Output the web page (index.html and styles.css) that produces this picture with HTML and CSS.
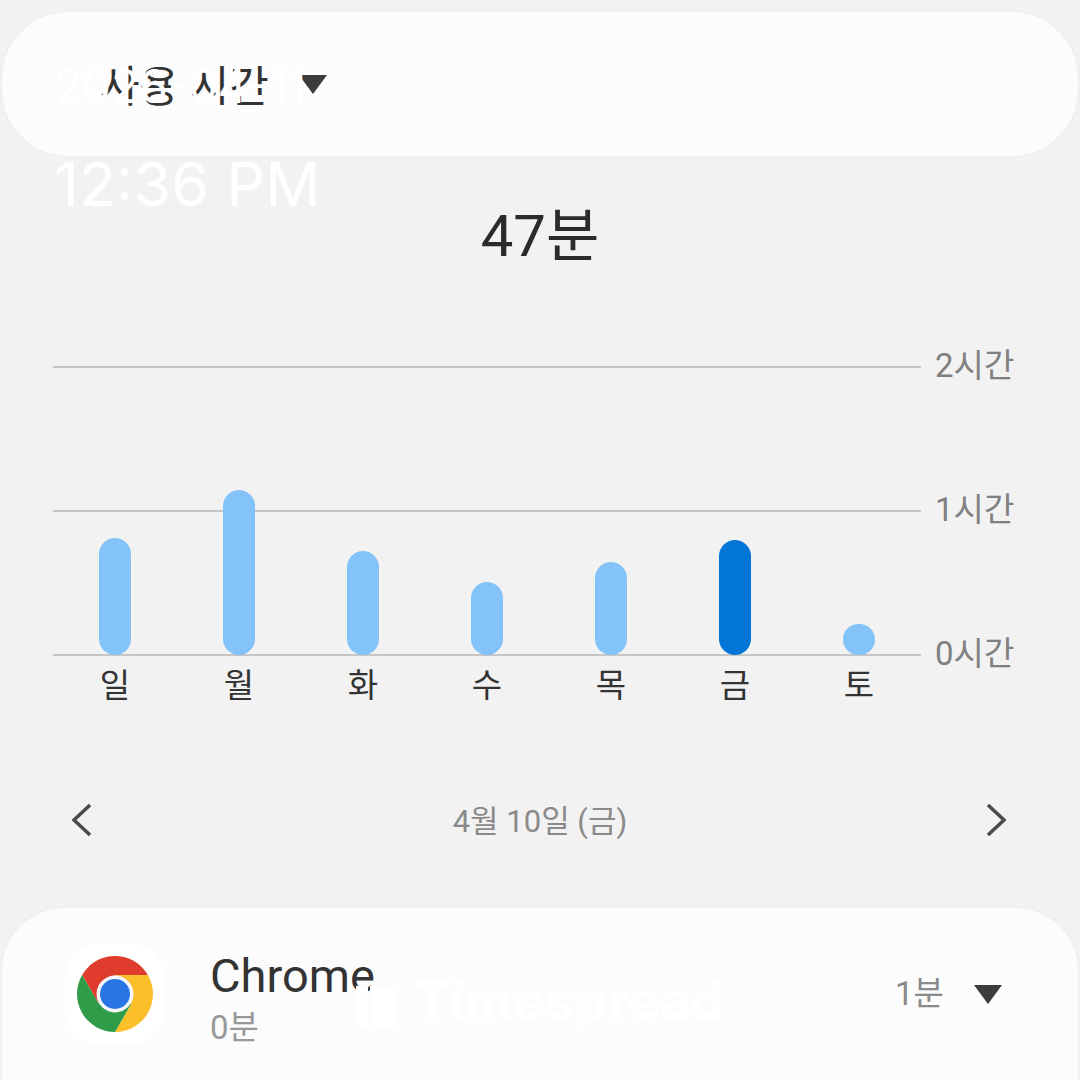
FILE: index.html
```html
<!DOCTYPE html>
<html lang="ko">
<head>
    <meta charset="UTF-8">
    <meta name="viewport" content="width=device-width, initial-scale=1.0">
    <title>사용 시간</title>
    <link rel="stylesheet" href="styles.css">
</head>
<body>
    <div class="screen">
        <div class="card top-card">
            <span class="top-title">사용 시간</span>
            <span class="arrow"></span>
        </div>

        <div class="total">47분</div>

        <div class="chart">
            <div class="grid-row"><div class="grid-line"></div><div class="grid-label">2시간</div></div>
            <div class="grid-row"><div class="grid-line"></div><div class="grid-label">1시간</div></div>
            <div class="grid-row"><div class="grid-line"></div><div class="grid-label">0시간</div></div>
            <div class="bars">
                <div class="bar-col"><div class="bar" style="height: 117px"></div></div>
                <div class="bar-col"><div class="bar" style="height: 165px"></div></div>
                <div class="bar-col"><div class="bar" style="height: 104px"></div></div>
                <div class="bar-col"><div class="bar" style="height: 73px"></div></div>
                <div class="bar-col"><div class="bar" style="height: 93px"></div></div>
                <div class="bar-col"><div class="bar bar-active" style="height: 115px"></div></div>
                <div class="bar-col"><div class="bar" style="height: 31px"></div></div>
            </div>
        </div>

        <div class="days">
            <div>일</div>
            <div>월</div>
            <div>화</div>
            <div>수</div>
            <div>목</div>
            <div>금</div>
            <div>토</div>
        </div>

        <div class="date-nav">
            <svg class="chevron" width="24" height="36" viewBox="0 0 24 36"><path d="M18 3 L2 18 L18 33" /></svg>
            <span class="date-text">4월 10일 (금)</span>
            <svg class="chevron" width="24" height="36" viewBox="0 0 24 36"><path d="M4 3 L20 18 L4 33" /></svg>
        </div>

        <div class="card app-card">
            <div class="app-icon">
                <svg width="76" height="76" viewBox="-38 -38 76 76">
                    <path fill="#e03c2d" d="M32.9 -19 H0 L-16.45 9.5 L-32.9 -19 A38 38 0 0 1 32.9 -19 Z" />
                    <path fill="#fbbf2a" d="M32.9 -19 H0 L16.45 9.5 L0 38 A38 38 0 0 0 32.9 -19 Z" />
                    <path fill="#2f9c49" d="M-32.9 -19 L-16.45 9.5 L16.45 9.5 L0 38 A38 38 0 0 1 -32.9 -19 Z" />
                    <circle r="18.5" fill="#f4f6fb" />
                    <circle r="15" fill="#2a75e6" />
                </svg>
            </div>
            <div class="app-info">
                <div class="app-name">Chrome</div>
                <div class="app-sub">0분</div>
            </div>
            <div class="app-time">1분</div>
            <span class="arrow arrow-small"></span>
        </div>
    </div>

    <!-- stamp laid over the screenshot -->
    <div class="stamp">
        <div class="stamp-date">2026-04-11</div>
        <div class="stamp-time">12:36 PM</div>
    </div>
    <div class="mark">
        <svg class="mark-icon" width="42" height="40" viewBox="0 0 42 40"><path fill="#fff" d="M0 0 H12 V11 H0 Z M0 13 H12 V40 H0 Z M14 0 H42 V40 H14 Z" /></svg>
        <span class="mark-text">Timespread</span>
    </div>
</body>
</html>
```

FILE: styles.css
```css
* {
    box-sizing: border-box;
}
body {
    margin: 0;
    background-color: #f2f2f2;
    color: #2b2b2b;
    font-family: Roboto, "Noto Sans CJK KR", sans-serif;
    position: relative;
    width: 1080px;
    height: 1080px;
    overflow: hidden;
}
.screen {
    padding-top: 12px;
}
.card {
    background-color: #fcfcfc;
    margin: 0 2px;
    box-shadow: 0 0 2px #e2e2e2;
}
.top-card {
    height: 144px;
    border-radius: 66px;
    display: flex;
    align-items: center;
    padding-left: 98px;
}
.top-title {
    font-size: 43px;
    line-height: 50px;
    color: #333;
    margin-top: 5px;
}
.arrow {
    width: 0;
    height: 0;
    margin-left: 30px;
    border-left: 14px solid transparent;
    border-right: 14px solid transparent;
    border-top: 19px solid #3c3c3c;
}
.total {
    text-align: center;
    font-size: 58px;
    line-height: 70px;
    margin-top: 45px;
}

/* chart */
.chart {
    position: relative;
    margin: 95px 0 0 53px;
    width: 970px;
    height: 290px;
    display: flex;
    flex-direction: column;
    justify-content: space-between;
}
.grid-row {
    display: flex;
    align-items: center;
    height: 2px;
}
.grid-line {
    width: 868px;
    height: 2px;
    background-color: #c6c6c6;
}
.grid-label {
    margin: 0 0 3px 14px;
    font-size: 33px;
    line-height: 40px;
    color: #808080;
}
.bars {
    position: absolute;
    left: 0;
    bottom: 1px;
    width: 868px;
    display: flex;
    align-items: flex-end;
}
.bar-col {
    flex: 1;
    display: flex;
    justify-content: center;
}
.bar {
    width: 32px;
    background-color: #84c3f9;
    border-radius: 16px;
}
.bar-active {
    background-color: #0276d6;
}
.days {
    display: flex;
    width: 868px;
    margin: 9px 0 0 53px;
    font-size: 33px;
    line-height: 42px;
    color: #333;
}
.days div {
    flex: 1;
    text-align: center;
}

/* date row */
.date-nav {
    display: flex;
    justify-content: space-between;
    align-items: center;
    margin-top: 91px;
    padding: 0 72px;
    height: 44px;
}
.chevron path {
    fill: none;
    stroke: #4a4a4a;
    stroke-width: 3.5;
}
.date-text {
    font-size: 31px;
    color: #8a8a8a;
    margin-bottom: 3px;
}

/* app list */
.app-card {
    margin-top: 66px;
    height: 172px;
    border-radius: 62px 62px 0 0;
    display: flex;
    align-items: flex-start;
    padding: 35px 76px 0 63px;
}
.app-icon {
    width: 100px;
    height: 102px;
    border-radius: 36px;
    background-color: #fff;
    display: flex;
    align-items: center;
    justify-content: center;
}
.app-info {
    margin-left: 45px;
    flex: 1;
    margin-top: 3px;
}
.app-name {
    font-size: 47px;
    line-height: 60px;
    color: #333;
}
.app-sub {
    font-size: 33px;
    line-height: 44px;
    color: #999;
}
.app-time {
    font-size: 33px;
    line-height: 44px;
    color: #8a8a8a;
    margin-top: 29px;
}
.arrow-small {
    margin-top: 42px;
}

/* overlaid watermark */
.stamp {
    position: absolute;
    left: 54px;
    top: 58px;
    color: #fff;
    font-family: Inter, sans-serif;
    font-weight: 400;
}
.stamp-date {
    font-size: 46px;
    line-height: 56px;
}
.stamp-time {
    font-size: 61px;
    line-height: 72px;
    margin-top: 34px;
}
.mark {
    position: absolute;
    left: 356px;
    top: 971px;
    display: flex;
    align-items: center;
}
.mark-icon {
    margin: 10px 17px 0 0;
}
.mark-text {
    font-family: Inter, sans-serif;
    font-weight: 700;
    font-size: 53px;
    line-height: 60px;
    color: #fff;
}
```
